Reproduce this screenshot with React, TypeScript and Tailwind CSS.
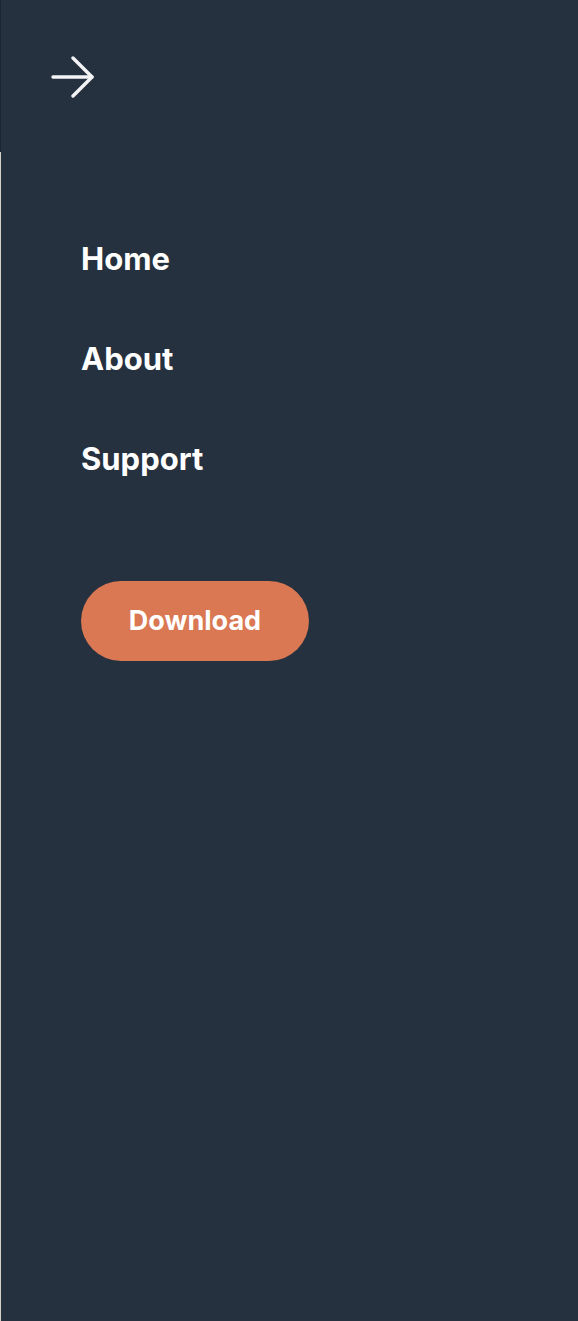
import React from 'react';

const links = ['Home', 'About', 'Support'];

export default function App() {
  return (
    <div className="flex min-h-[1321px] w-full bg-[#d6d2ca]">
      <div className="w-px shrink-0 flex flex-col">
        <div className="h-[152px] bg-[#1c2430]" />
      </div>
      <aside className="flex-1 bg-[#263140] font-['Inter',sans-serif] text-white">
        <div className="pl-[50px] pt-[56px]">
          <svg width="44" height="42" viewBox="0 0 44 42" fill="none" stroke="#f3f4f6" strokeWidth="3.4" strokeLinecap="round" strokeLinejoin="round">
            <path d="M2 21h39" />
            <path d="M22 2l19 19-19 19" />
          </svg>
        </div>
        <nav className="mt-[110px] flex flex-col items-start pl-[80px]">
          {links.map((l) => (
            <a key={l} href="#" className="h-[100px] flex items-center text-[31px] font-bold leading-none">
              {l}
            </a>
          ))}
          <button className="mt-[73px] h-[80px] w-[228px] rounded-full bg-[#d97853] text-[27px] font-bold text-white">
            Download
          </button>
        </nav>
      </aside>
    </div>
  );
}
